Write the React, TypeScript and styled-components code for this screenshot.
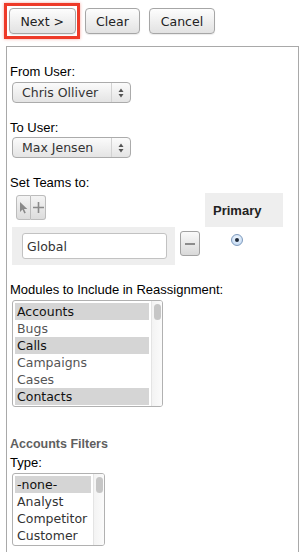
import React from 'react'
import styled, { createGlobalStyle } from 'styled-components'

const GlobalStyle = createGlobalStyle`
  html, body {
    margin: 0;
    padding: 0;
    background: #fff;
    font-family: 'Liberation Sans', Arial, sans-serif;
    color: #000;
    overflow: hidden;
  }
`

const uiFont = `'DejaVu Sans', 'Liberation Sans', sans-serif`

const Page = styled.div`
  width: 303px;
  height: 552px;
  overflow: hidden;
`

const Toolbar = styled.div`
  display: flex;
  gap: 9px;
  padding: 8px 0 0 9px;
`

const Button = styled.button<{ $highlight?: boolean }>`
  position: relative;
  height: 26px;
  padding: 0 10.5px;
  font-family: ${uiFont};
  font-size: 12.5px;
  color: #222;
  border: 1px solid #a6a6a6;
  border-radius: 4px;
  background: linear-gradient(#fdfdfd, #e2e2e2);
  box-shadow: 0 1px 1px rgba(0, 0, 0, 0.08);
  cursor: pointer;
  &::after {
    content: '';
    display: ${({ $highlight }) => ($highlight ? 'block' : 'none')};
    position: absolute;
    inset: -6px -5px -6px -6px;
    border: 3px solid #ee3a28;
    box-shadow: 0 0 3px rgba(238, 58, 40, 0.45);
    pointer-events: none;
  }
`

const Panel = styled.div`
  margin: 12px 0 0 6px;
  width: 285px;
  min-height: 600px;
  border: 1px solid #a9a9a9;
  padding: 17px 3px 0;
`

const Label = styled.div<{ $gap?: number }>`
  font-size: 13px;
  line-height: 16px;
  margin-top: ${({ $gap }) => $gap ?? 0}px;
`

const SectionTitle = styled.div`
  font-size: 12.5px;
  line-height: 15px;
  font-weight: bold;
  color: #5f5f5f;
  margin-top: 30px;
`

const Select = styled.div<{ $gap?: number }>`
  display: flex;
  align-items: center;
  box-sizing: border-box;
  width: 119px;
  height: 21px;
  margin: ${({ $gap }) => $gap ?? 0}px 0 0 2px;
  border: 1px solid #ababab;
  border-radius: 4px;
  background: linear-gradient(#fbfbfb, #e4e4e4);
  font-family: ${uiFont};
  font-size: 12.5px;
  color: #333;
`

const SelectText = styled.span`
  flex: 1;
  padding-left: 9px;
`

const SelectArrows = styled.span`
  width: 18px;
  height: 100%;
  border-left: 1px solid #d2d2d2;
  display: flex;
  align-items: center;
  justify-content: center;
`

const TeamsGrid = styled.div`
  display: grid;
  grid-template-columns: 163px 20px 78px;
  grid-template-rows: 34px 38px;
  column-gap: 5px;
  margin: 2px 0 0 2px;
`

const ToolCell = styled.div`
  padding: 2px 0 0 4px;
  display: flex;
`

const ToolButton = styled.span<{ $first?: boolean }>`
  width: 15px;
  height: 25px;
  box-sizing: border-box;
  display: flex;
  align-items: center;
  justify-content: center;
  border: 1px solid #bcbcbc;
  border-radius: ${({ $first }) => ($first ? '3px 0 0 3px' : '0 3px 3px 0')};
  border-left-width: ${({ $first }) => ($first ? '1px' : '0')};
  background: linear-gradient(#f4f4f4, #dcdcdc);
`

const HeaderCell = styled.div`
  background: #eeeeee;
  font-size: 13px;
  font-weight: bold;
  color: #222;
  display: flex;
  align-items: center;
  padding-left: 8px;
`

const TeamCell = styled.div`
  background: #eeeeee;
  padding: 6px 8px 0 10px;
`

const TeamInput = styled.div`
  box-sizing: border-box;
  height: 26px;
  border: 1px solid #c2c2c2;
  border-radius: 3px;
  background: #fff;
  font-family: ${uiFont};
  font-size: 12.5px;
  color: #333;
  display: flex;
  align-items: center;
  padding-left: 4px;
`

const MinusButton = styled.span`
  box-sizing: border-box;
  margin-top: 4px;
  width: 20px;
  height: 25px;
  border: 1px solid #a2a2a2;
  border-radius: 3px;
  background: linear-gradient(#fafafa, #d9d9d9);
  display: flex;
  align-items: center;
  justify-content: center;
  &::before {
    content: '';
    width: 10px;
    height: 2px;
    background: #8c8c8c;
  }
`

const RadioCell = styled.div`
  padding: 7px 0 0 26px;
`

const Radio = styled.span`
  display: flex;
  align-items: center;
  justify-content: center;
  box-sizing: border-box;
  width: 12px;
  height: 12px;
  border-radius: 50%;
  border: 1px solid #7f9bbd;
  background: radial-gradient(circle at 50% 35%, #f2f8ff, #b9d3f0);
  &::after {
    content: '';
    width: 4px;
    height: 4px;
    border-radius: 50%;
    background: #1e2a3a;
  }
`

const ListBox = styled.div<{ $width: number; $height: number }>`
  display: flex;
  box-sizing: border-box;
  width: ${({ $width }) => $width}px;
  height: ${({ $height }) => $height}px;
  margin: 2px 0 0 2px;
  border: 1px solid #b1b1b1;
  border-radius: 3px;
  overflow: hidden;
  background: #fff;
`

const ListItems = styled.div`
  flex: 1;
  padding: 2px 2px 0 2px;
`

const ListItem = styled.div<{ $selected?: boolean; $muted?: boolean }>`
  height: 17px;
  line-height: 17px;
  padding-left: 2px;
  font-family: ${uiFont};
  font-size: 12.5px;
  white-space: nowrap;
  color: ${({ $selected, $muted }) => ($selected ? '#111' : $muted ? '#555' : '#333')};
  background: ${({ $selected }) => ($selected ? '#d5d5d5' : 'transparent')};
`

const ScrollTrack = styled.div`
  width: 10px;
  border-left: 1px solid #e4e4e4;
  background: linear-gradient(90deg, #f3f3f3, #fbfbfb);
  display: flex;
  justify-content: center;
  padding-top: 3px;
`

const ScrollThumb = styled.div`
  width: 7px;
  height: 16px;
  border-radius: 4px;
  background: #c6c6c6;
`

const UpDown = () => (
  <svg width="6" height="10" viewBox="0 0 6 10">
    <path d="M3 0.5 L5.5 4 H0.5 Z" fill="#555" />
    <path d="M3 9.5 L5.5 6 H0.5 Z" fill="#555" />
  </svg>
)

const CursorIcon = () => (
  <svg width="9" height="13" viewBox="0 0 9 13">
    <path d="M1 1 L1 11 L3.5 8.6 L5.3 12.4 L6.8 11.7 L5 8 L8.3 8 Z" fill="#8a8a8a" />
  </svg>
)

const PlusIcon = () => (
  <svg width="11" height="11" viewBox="0 0 11 11">
    <path d="M5.5 0 V11 M0 5.5 H11" stroke="#8a8a8a" strokeWidth="1.6" />
  </svg>
)

const modules = [
  { name: 'Accounts', selected: true },
  { name: 'Bugs' },
  { name: 'Calls', selected: true },
  { name: 'Campaigns' },
  { name: 'Cases' },
  { name: 'Contacts', selected: true },
]

const types = [
  { name: '-none-', selected: true },
  { name: 'Analyst' },
  { name: 'Competitor' },
  { name: 'Customer' },
]

export default function App() {
  return (
    <Page>
      <GlobalStyle />
      <Toolbar>
        <Button $highlight>Next &gt;</Button>
        <Button>Clear</Button>
        <Button>Cancel</Button>
      </Toolbar>
      <Panel>
        <Label>From User:</Label>
        <Select $gap={2}>
          <SelectText>Chris Olliver</SelectText>
          <SelectArrows>
            <UpDown />
          </SelectArrows>
        </Select>

        <Label $gap={17}>To User:</Label>
        <Select $gap={1}>
          <SelectText>Max Jensen</SelectText>
          <SelectArrows>
            <UpDown />
          </SelectArrows>
        </Select>

        <Label $gap={17}>Set Teams to:</Label>
        <TeamsGrid>
          <ToolCell>
            <ToolButton $first>
              <CursorIcon />
            </ToolButton>
            <ToolButton>
              <PlusIcon />
            </ToolButton>
          </ToolCell>
          <div />
          <HeaderCell>Primary</HeaderCell>
          <TeamCell>
            <TeamInput>Global</TeamInput>
          </TeamCell>
          <MinusButton />
          <RadioCell>
            <Radio />
          </RadioCell>
        </TeamsGrid>

        <Label $gap={17}>Modules to Include in Reassignment:</Label>
        <ListBox $width={151} $height={107}>
          <ListItems>
            {modules.map((m) => (
              <ListItem key={m.name} $selected={m.selected} $muted={!m.selected}>
                {m.name}
              </ListItem>
            ))}
          </ListItems>
          <ScrollTrack>
            <ScrollThumb />
          </ScrollTrack>
        </ListBox>

        <SectionTitle>Accounts Filters</SectionTitle>
        <Label $gap={3}>Type:</Label>
        <ListBox $width={93} $height={73}>
          <ListItems>
            {types.map((t) => (
              <ListItem key={t.name} $selected={t.selected}>
                {t.name}
              </ListItem>
            ))}
          </ListItems>
          <ScrollTrack>
            <ScrollThumb />
          </ScrollTrack>
        </ListBox>
      </Panel>
    </Page>
  )
}
